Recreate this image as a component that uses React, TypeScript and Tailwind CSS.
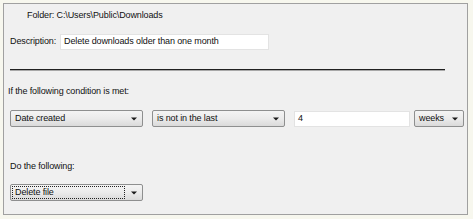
import React from "react";

function Arrow() {
  return (
    <svg width="6" height="4" viewBox="0 0 6 4" className="shrink-0">
      <path d="M0 0.5 H6 L3 3.5 Z" fill="#1a1a1a" />
    </svg>
  );
}

function Combo({ label, width, focus }: { label: string; width: string; focus?: boolean }) {
  return (
    <div
      className={`${width} h-[17px] shrink-0 flex items-center border border-[#8e8f8f] rounded-[2px] bg-gradient-to-b from-[#f4f4f4] via-[#ebebeb] to-[#dadada] pr-[5px]`}
    >
      <div className="flex-1 h-full flex items-center pl-[1px] py-[1px]">
        <div
          className={`flex-1 h-full flex items-center pl-[2px] ${
            focus ? "border border-dotted border-[#222]" : "border border-transparent"
          }`}
        >
          {label}
        </div>
      </div>
      <div className="w-[12px] flex justify-end">
        <Arrow />
      </div>
    </div>
  );
}

export default function App() {
  return (
    <div
      className="w-[473px] h-[219px] bg-[#f7f7ee] pt-[3px] pl-[3px] text-[9px] tracking-[-0.12px] text-[#111]"
      style={{ fontFamily: '"Liberation Sans", Arial, sans-serif' }}
    >
      <div className="w-[465px] h-[212px] bg-[#f0f0f0] border border-[#a0a0a0] pl-[6px] pt-[5px] flex flex-col">
        <div className="h-[12px] leading-[12px] pl-[17px]">Folder: C:\Users\Public\Downloads</div>
        <div className="mt-[13px] h-[16px] flex items-center">
          <div className="w-[50px]">Description:</div>
          <div className="w-[209px] h-[16px] bg-white border border-[#e3e3e3] flex items-center pl-[3px]">
            Delete downloads older than one month
          </div>
        </div>
        <div className="mt-[19px] w-[435px] h-[1px] bg-[#202020]" />
        <div className="w-[435px] h-[1px] bg-[#a8a8a8]" />
        <div className="mt-[14px] h-[12px] leading-[12px] -ml-[2px]">If the following condition is met:</div>
        <div className="mt-[13px] flex items-center">
          <Combo label="Date created" width="w-[133px]" />
          <div className="w-[9px]" />
          <Combo label="is not in the last" width="w-[133px]" />
          <div className="w-[9px]" />
          <div className="w-[116px] h-[16px] bg-white border border-[#e3e3e3] flex items-center pl-[3px]">4</div>
          <div className="w-[4px]" />
          <Combo label="weeks" width="w-[50px]" />
        </div>
        <div className="mt-[33px] h-[12px] leading-[12px]">Do the following:</div>
        <div className="mt-[12px] flex">
          <Combo label="Delete file" width="w-[133px]" focus />
        </div>
      </div>
    </div>
  );
}
